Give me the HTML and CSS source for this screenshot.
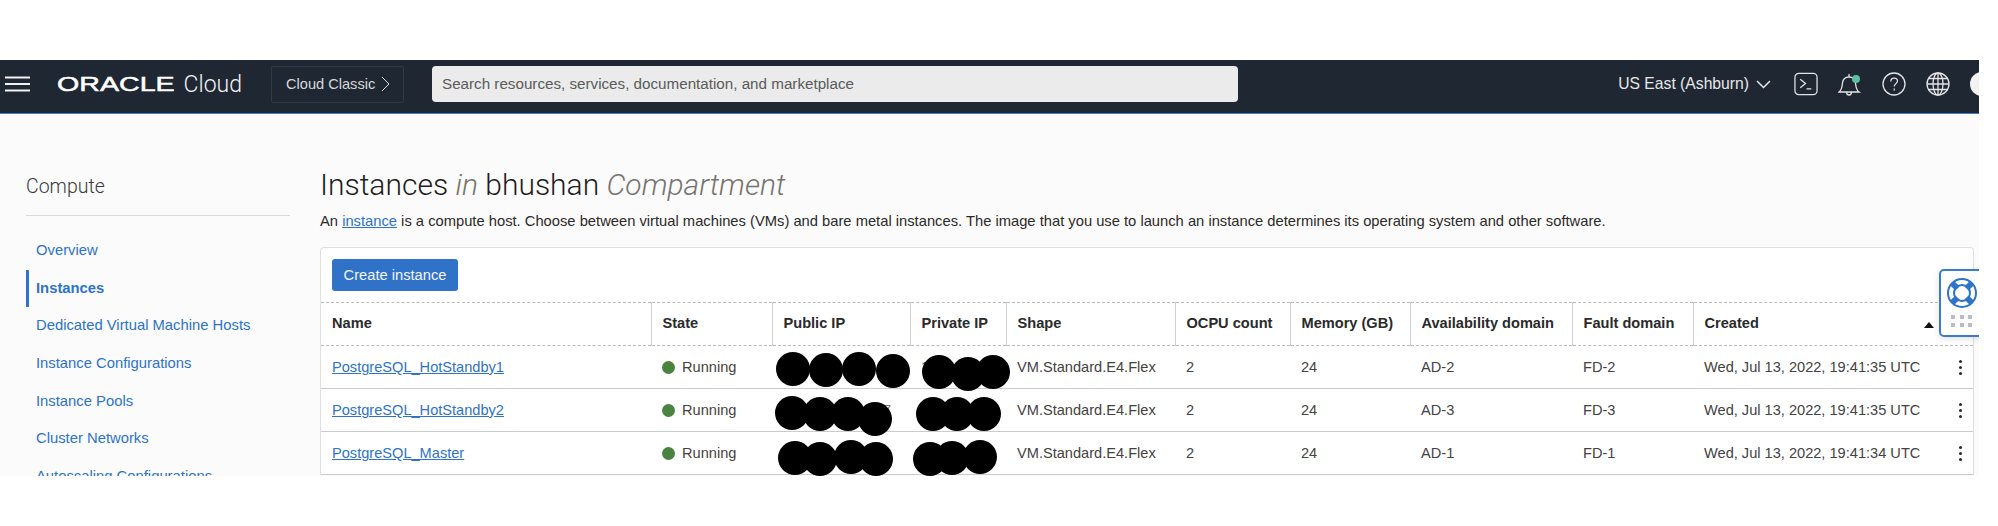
FILE: index.html
```html
<!DOCTYPE html>
<html lang="en">
<head>
<meta charset="utf-8">
<title>Instances in bhushan Compartment</title>
<link rel="stylesheet" href="styles.css">
</head>
<body>
<div class="app">
  <header class="topbar">
    <svg class="burger" viewBox="0 0 25 16" aria-hidden="true"><path d="M0 1.5h25M0 8h25M0 14.500h25" /></svg>
    <div class="brand"><span class="brand-oracle">ORACLE</span><span class="brand-cloud">Cloud</span></div>
    <div class="classic"><span>Cloud Classic</span>
      <svg class="classic-chevron" viewBox="0 0 9 16" aria-hidden="true"><path d="M1 1l7 7-7 7"/></svg>
    </div>
    <div class="search">Search resources, services, documentation, and marketplace</div>
    <div class="tools">
      <div class="region"><span>US East (Ashburn)</span>
        <svg class="region-chevron" viewBox="0 0 15 9" aria-hidden="true"><path d="M1 1l6.500 6.500L14 1"/></svg>
      </div>
      <svg class="tool" viewBox="0 0 25 24" aria-hidden="true"><rect x="1" y="1" width="23" height="22" rx="4"/><path d="M6.500 7l5.500 4.500-5.500 4.500M13 17h5"/></svg>
      <svg class="tool" viewBox="0 0 24 24" aria-hidden="true"><path d="M1 20c3-2 3-5 3.500-9C5 7 8 5 11 5s6 2 6.500 6c.500 4 .500 7 3.500 9zM11 5V2M8.500 20c0 4 5 4 5 0"/><circle class="bell-dot" cx="18" cy="7" r="4"/></svg>
      <svg class="tool" viewBox="0 0 24 24" aria-hidden="true"><circle cx="12" cy="12" r="11"/><path d="M8.800 9.500c0-4.500 6.700-4.500 6.700-.500 0 2.500-3.300 2.800-3.300 5.500M12.200 16.500v2"/></svg>
      <svg class="tool" viewBox="0 0 24 24" aria-hidden="true"><circle cx="12" cy="12" r="11"/><ellipse cx="12" cy="12" rx="5" ry="11"/><path d="M12 1v22M1 12h22M2.500 6.500h19M2.500 17.500h19"/></svg>
      <div class="avatar"></div>
    </div>
  </header>

  <div class="page">
    <aside class="sidebar">
      <h2 class="side-title">Compute</h2>
      <nav class="side-nav">
        <a class="side-link">Overview</a>
        <a class="side-link side-link-active">Instances</a>
        <a class="side-link">Dedicated Virtual Machine Hosts</a>
        <a class="side-link">Instance Configurations</a>
        <a class="side-link">Instance Pools</a>
        <a class="side-link">Cluster Networks</a>
        <a class="side-link">Autoscaling Configurations</a>
      </nav>
    </aside>

    <main class="content">
      <h1 class="title">Instances <i class="dim">in</i> bhushan <i class="dim">Compartment</i></h1>
      <p class="intro">An <a class="link">instance</a> is a compute host. Choose between virtual machines (VMs) and bare metal instances. The image that you use to launch an instance determines its operating system and other software.</p>

      <section class="panel">
        <div class="actions"><button class="primary">Create instance</button></div>
        <table class="grid">
          <colgroup>
            <col class="c-name"><col class="c-state"><col class="c-public"><col class="c-private"><col class="c-shape">
            <col class="c-ocpu"><col class="c-mem"><col class="c-ad"><col class="c-fd"><col class="c-created">
          </colgroup>
          <thead>
            <tr>
              <th>Name</th><th>State</th><th>Public IP</th><th>Private IP</th><th>Shape</th>
              <th>OCPU count</th><th>Memory (GB)</th><th>Availability domain</th><th>Fault domain</th>
              <th><div class="sorted">Created<span class="sort-arrow"></span></div></th>
            </tr>
          </thead>
          <tbody>
            <tr>
              <td><a class="link">PostgreSQL_HotStandby1</a></td>
              <td><span class="status"></span>Running</td>
              <td></td><td class="peek-left">1</td>
              <td>VM.Standard.E4.Flex</td><td>2</td><td>24</td><td>AD-2</td><td>FD-2</td>
              <td><div class="row-end">Wed, Jul 13, 2022, 19:41:35 UTC<span class="kebab"></span></div></td>
            </tr>
            <tr>
              <td><a class="link">PostgreSQL_HotStandby2</a></td>
              <td><span class="status"></span>Running</td>
              <td class="peek-right">7</td><td></td>
              <td>VM.Standard.E4.Flex</td><td>2</td><td>24</td><td>AD-3</td><td>FD-3</td>
              <td><div class="row-end">Wed, Jul 13, 2022, 19:41:35 UTC<span class="kebab"></span></div></td>
            </tr>
            <tr>
              <td><a class="link">PostgreSQL_Master</a></td>
              <td><span class="status"></span>Running</td>
              <td></td><td></td>
              <td>VM.Standard.E4.Flex</td><td>2</td><td>24</td><td>AD-1</td><td>FD-1</td>
              <td><div class="row-end">Wed, Jul 13, 2022, 19:41:34 UTC<span class="kebab"></span></div></td>
            </tr>
          </tbody>
        </table>
      </section>
    </main>
  </div>

  <svg class="redactions" viewBox="760 300 280 190" aria-hidden="true">
    <circle cx="793" cy="369" r="17"/><circle cx="826" cy="370" r="17"/><circle cx="859" cy="369" r="17"/><circle cx="893" cy="371" r="17"/>
    <circle cx="939" cy="372" r="17"/><circle cx="968" cy="374" r="17"/><circle cx="993" cy="372" r="17"/>
    <circle cx="792" cy="413" r="17"/><circle cx="820" cy="414" r="17"/><circle cx="848" cy="414" r="17"/><circle cx="875" cy="419" r="17"/>
    <circle cx="933" cy="414" r="17"/><circle cx="957" cy="414" r="17"/><circle cx="984" cy="414" r="17"/>
    <circle cx="795" cy="458" r="17"/><circle cx="820" cy="459" r="17"/><circle cx="851" cy="457" r="17"/><circle cx="876" cy="459" r="17"/>
    <circle cx="930" cy="459" r="17"/><circle cx="952" cy="458" r="17"/><circle cx="980" cy="457" r="17"/>
  </svg>

  <aside class="help">
    <svg class="buoy" viewBox="0 0 30 30" aria-hidden="true">
      <circle class="buoy-ring" cx="15" cy="15" r="14"/>
      <circle class="buoy-ring" cx="15" cy="15" r="8"/>
      <path class="buoy-band" d="M5 5l5.500 5.500M25 5l-5.500 5.500M5 25l5.500-5.500M25 25l-5.500-5.500"/>
    </svg>
    <div class="dots"><i></i><i></i><i></i><i></i><i></i><i></i></div>
  </aside>
</div>
</body>
</html>
```
FILE: styles.css
```css
* { box-sizing: border-box; }
html, body { margin: 0; background: #fff; }
body { font-family: "Liberation Sans", Arial, sans-serif; font-size: 14.700px; color: #2b2a28; }

.app {
  position: relative;
  width: 1979px;
  height: 416px;
  margin-top: 60px;
  overflow: hidden;
  background: #fbfbfb;
}

/* top bar */
.topbar {
  display: flex;
  align-items: center;
  height: 54px;
  padding-bottom: 5px;
  border-bottom: 1px solid #3a7cc9;
  background: #1f2733;
  color: #e8e8e8;
}
.burger { width: 25px; height: 16px; margin-left: 5px; stroke: #f2f2f2; stroke-width: 2; fill: none; }
.brand { display: flex; align-items: center; width: 185px; margin-left: 27px; }
.brand-oracle {
  display: inline-block;
  width: 128px;
  font-size: 20px;
  font-weight: 400;
  color: #fff;
  -webkit-text-stroke: .5px #fff;
  transform: scaleX(1.430);
  transform-origin: left center;
}
.brand-cloud { font-family: Roboto, sans-serif; font-weight: 300; font-size: 23px; color: #f2f2f2; }
.classic {
  display: flex;
  align-items: center;
  gap: 6px;
  width: 133px;
  height: 37px;
  margin-left: 29px;
  padding-left: 14px;
  border: 1px solid #2f3947;
  border-radius: 2px;
  font-size: 14.600px;
  color: #d8d8d8;
}
.classic-chevron { width: 9px; height: 16px; fill: none; stroke: #e0e0e0; stroke-width: 1; }
.search {
  width: 806px;
  height: 36px;
  margin-left: 28px;
  padding-left: 10px;
  border-radius: 4px;
  background: #ebebeb;
  color: #5a5a5a;
  font-size: 15.200px;
  line-height: 35px;
}
.tools { display: flex; align-items: center; gap: 20px; margin-left: auto; margin-right: -15px; }
.region { display: flex; align-items: center; gap: 7px; margin-right: 3px; font-size: 15.700px; color: #e8e8e8; }
.region-chevron { width: 15px; height: 9px; fill: none; stroke: #e8e8e8; stroke-width: 1.500; }
.tool { width: 24px; height: 24px; fill: none; stroke: #e4e4e4; stroke-width: 1.300; }
.bell-dot { fill: #5dbf9f; stroke: none; }
.avatar { width: 24px; height: 24px; border-radius: 50%; background: #f2f2f2; }

/* page */
.page { display: flex; gap: 30px; padding: 0 5px 0 26px; }
.sidebar { flex: 0 0 264px; padding-top: 58px; }
.side-title {
  margin: 0;
  padding-bottom: 13px;
  border-bottom: 1px solid #d9d9d9;
  font-family: Roboto, sans-serif;
  font-weight: 300;
  font-size: 19.500px;
  line-height: 30px;
  color: #3a3a3a;
}
.side-nav { display: flex; flex-direction: column; margin-top: 16px; }
.side-link {
  height: 37.670px;
  padding-left: 10px;
  line-height: 37.670px;
  font-size: 14.800px;
  color: #2d73c8;
  white-space: nowrap;
}
.side-link-active { border-left: 3px solid #2d73c8; padding-left: 7px; font-weight: 700; }

.content { flex: 1; min-width: 0; padding-top: 54px; }
.title { margin: 0; font-family: Roboto, sans-serif; font-weight: 300; font-size: 30px; line-height: 34px; color: #1e1e1e; white-space: nowrap; }
.dim { color: #77736f; }
.intro { margin: 9px 0 0; line-height: 20px; font-size: 14.740px; color: #2b2a28; white-space: nowrap; }
.link { color: #2d73c8; text-decoration: underline; }

.panel { margin-top: 16px; border: 1px solid #e0e0e0; border-bottom: 0; border-radius: 4px 4px 0 0; background: #fff; }
.actions { padding: 11px 11px; }
.primary {
  display: block;
  width: 126px;
  height: 32px;
  padding: 0;
  border: 0;
  border-radius: 3px;
  background: #2f72c8;
  color: #f4f7fb;
  font: 14.700px "Liberation Sans", Arial, sans-serif;
}

/* table */
.grid { width: 100%; table-layout: fixed; border-collapse: collapse; }
.c-name { width: 330px; }
.c-state { width: 121px; }
.c-public { width: 138px; }
.c-private { width: 96px; }
.c-shape { width: 169px; }
.c-ocpu { width: 115px; }
.c-mem { width: 120px; }
.c-ad { width: 162px; }
.c-fd { width: 121px; }
.grid th {
  height: 43px;
  padding: 0 0 2px 11px;
  border-top: 1px dashed #bcbcbc;
  border-bottom: 1px dashed #bcbcbc;
  border-left: 1px solid #ccd0d6;
  text-align: left;
  font-size: 14.600px;
  font-weight: 700;
  color: #2a2a2a;
  white-space: nowrap;
}
.grid th:first-child { border-left: 0; padding-left: 11px; }
.grid td {
  height: 43px;
  padding: 0 0 0 11px;
  border-bottom: 1px solid #c8ccd1;
  font-size: 14.600px;
  color: #45423f;
  white-space: nowrap;
}
.status {
  display: inline-block;
  width: 13px;
  height: 13px;
  margin-right: 7px;
  border-radius: 50%;
  background: #4a8240;
  vertical-align: -2px;
}
.peek-right { padding-right: 19px !important; text-align: right; color: #77736f !important; }
.sorted, .row-end { display: flex; align-items: center; justify-content: space-between; }
.sorted { padding-right: 39px; }
.sort-arrow {
  width: 0;
  height: 0;
  margin-top: 3px;
  border-left: 5px solid transparent;
  border-right: 5px solid transparent;
  border-bottom: 6px solid #111;
}
.row-end { padding-right: 11px; }
.kebab {
  width: 3px;
  height: 3px;
  border-radius: 50%;
  background: #2a2a2a;
  box-shadow: 0 -6px 0 #2a2a2a, 0 6px 0 #2a2a2a;
}

/* blacked-out addresses */
.redactions { position: absolute; left: 760px; top: 240px; width: 280px; height: 190px; fill: #000; overflow: hidden; }

/* floating help */
.help {
  position: absolute;
  top: 209px;
  right: -6px;
  width: 46px;
  height: 68px;
  padding: 7px 0 0 6px;
  border: 2px solid #3a7cc9;
  border-radius: 5px;
  background: #fff;
  box-shadow: 0 2px 6px rgba(0, 0, 0, .12);
}
.buoy { display: block; width: 30px; height: 30px; fill: none; }
.buoy-ring { stroke: #2d73c8; stroke-width: 2; }
.buoy-band { stroke: #2d73c8; stroke-width: 6; }
.dots { display: grid; grid-template-columns: repeat(3, 4px); gap: 4px 4.500px; margin: 7px 0 0 4px; }
.dots i { width: 4px; height: 4px; background: #b9bdc3; }
```
